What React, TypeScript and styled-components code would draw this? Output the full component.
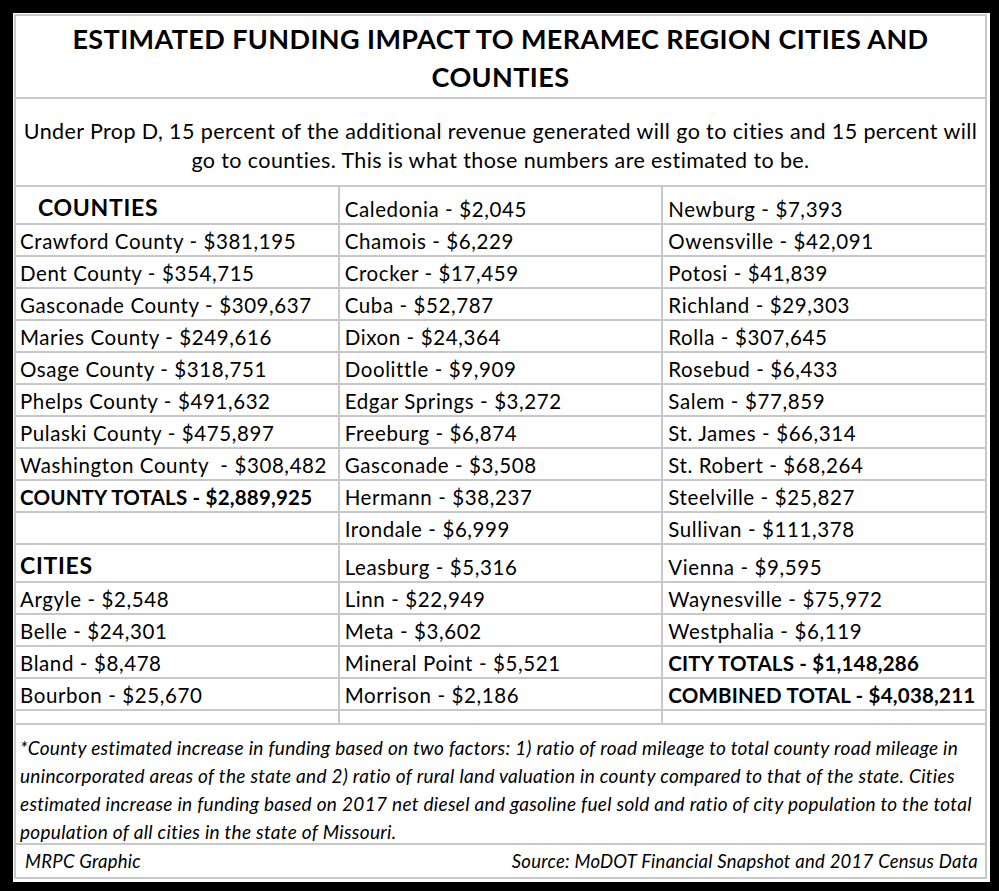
import React from "react";
import styled, { createGlobalStyle } from "styled-components";

const Global = createGlobalStyle`
  html, body { margin: 0; padding: 0; background: #000; }
  body { font-family: Lato, "Liberation Sans", sans-serif; color: #000; }
`;

const Frame = styled.div`
  width: 999px;
  height: 891px;
  box-sizing: border-box;
  background: #000;
  padding: 13px 9px 9px 13px;
`;

const Paper = styled.div`
  width: 100%;
  height: 100%;
  box-sizing: border-box;
  background: #fff;
  padding: 1px 3px 3px 1px;
`;

const Table = styled.div`
  box-sizing: border-box;
  height: 100%;
  border: 2px solid #c8c8c8;
  background: #c8c8c8;
  display: grid;
  grid-template-columns: repeat(3, 1fr);
  grid-template-rows: 81px 86px 36px repeat(10, 30px) 36px repeat(4, 30px) 12px 118px 32px;
  gap: 2px;
`;

const Title = styled.div`
  grid-column: 1 / -1;
  background: #fff;
  display: flex;
  align-items: center;
  justify-content: center;
  text-align: center;
  padding: 3px 40px 0;
  font-weight: 700;
  font-size: 27px;
  letter-spacing: 0.4px;
  line-height: 38px;
`;

const Subtitle = styled.div`
  grid-column: 1 / -1;
  background: #fff;
  display: flex;
  align-items: center;
  justify-content: center;
  text-align: center;
  padding: 7px 0 0;
  font-size: 21.5px;
  letter-spacing: 0.4px;
  line-height: 29px;
  white-space: nowrap;
`;

type Kind = "normal" | "bold" | "header" | "blank";

const Cell = styled.div<{ $kind: Kind; $indent?: number }>`
  background: #fff;
  display: flex;
  align-items: flex-end;
  padding: 0 0 2px ${(p) => p.$indent ?? 4}px;
  white-space: pre;
  overflow: hidden;
  font-size: ${(p) => (p.$kind === "header" ? "23px" : "20.5px")};
  letter-spacing: ${(p) => (p.$kind === "header" ? "0.7px" : p.$kind === "bold" ? "0.2px" : "0.6px")};
  font-weight: ${(p) => (p.$kind === "bold" || p.$kind === "header" ? 700 : 400)};
  line-height: ${(p) => (p.$kind === "header" ? "28px" : "24px")};
`;

const Footnote = styled.div`
  grid-column: 1 / -1;
  background: #fff;
  padding: 9px 0 0 4px;
  font-style: italic;
  font-size: 19px;
  letter-spacing: 0.3px;
  line-height: 28px;
  white-space: nowrap;
  overflow: hidden;
`;

const SourceRow = styled.div`
  grid-column: 1 / -1;
  background: #fff;
  display: flex;
  align-items: center;
  justify-content: space-between;
  padding: 0 7px 0 9px;
  font-style: italic;
  font-size: 18.5px;
  letter-spacing: 0.25px;
`;

type Entry = { text: string; kind?: Kind; indent?: number };

const col1: Entry[] = [
  { text: "COUNTIES", kind: "header", indent: 22 },
  { text: "Crawford County - $381,195" },
  { text: "Dent County - $354,715" },
  { text: "Gasconade County - $309,637" },
  { text: "Maries County - $249,616" },
  { text: "Osage County - $318,751" },
  { text: "Phelps County - $491,632" },
  { text: "Pulaski County - $475,897" },
  { text: "Washington County  - $308,482" },
  { text: "COUNTY TOTALS - $2,889,925", kind: "bold" },
  { text: "", kind: "blank" },
  { text: "CITIES", kind: "header" },
  { text: "Argyle - $2,548" },
  { text: "Belle - $24,301" },
  { text: "Bland - $8,478" },
  { text: "Bourbon - $25,670" },
  { text: "", kind: "blank" },
];

const col2: Entry[] = [
  { text: "Caledonia - $2,045" },
  { text: "Chamois - $6,229" },
  { text: "Crocker - $17,459" },
  { text: "Cuba - $52,787" },
  { text: "Dixon - $24,364" },
  { text: "Doolittle - $9,909" },
  { text: "Edgar Springs - $3,272" },
  { text: "Freeburg - $6,874" },
  { text: "Gasconade - $3,508" },
  { text: "Hermann - $38,237" },
  { text: "Irondale - $6,999" },
  { text: "Leasburg - $5,316" },
  { text: "Linn - $22,949" },
  { text: "Meta - $3,602" },
  { text: "Mineral Point - $5,521" },
  { text: "Morrison - $2,186" },
  { text: "", kind: "blank" },
];

const col3: Entry[] = [
  { text: "Newburg - $7,393" },
  { text: "Owensville - $42,091" },
  { text: "Potosi - $41,839" },
  { text: "Richland - $29,303" },
  { text: "Rolla - $307,645" },
  { text: "Rosebud - $6,433" },
  { text: "Salem - $77,859" },
  { text: "St. James - $66,314" },
  { text: "St. Robert - $68,264" },
  { text: "Steelville - $25,827" },
  { text: "Sullivan - $111,378" },
  { text: "Vienna - $9,595" },
  { text: "Waynesville - $75,972" },
  { text: "Westphalia - $6,119" },
  { text: "CITY TOTALS - $1,148,286", kind: "bold" },
  { text: "COMBINED TOTAL - $4,038,211", kind: "bold" },
  { text: "", kind: "blank" },
];

export default function App() {
  const rows = col1.map((_, i) => [col1[i], col2[i], col3[i]]);
  return (
    <Frame>
      <Global />
      <Paper>
        <Table>
          <Title>
            ESTIMATED FUNDING IMPACT TO MERAMEC REGION CITIES AND
            <br />
            COUNTIES
          </Title>
          <Subtitle>
            Under Prop D, 15 percent of the additional revenue generated will go to cities and 15 percent will
            <br />
            go to counties. This is what those numbers are estimated to be.
          </Subtitle>
          {rows.flatMap((row, r) =>
            row.map((e, c) => (
              <Cell key={`${r}-${c}`} $kind={e.kind ?? "normal"} $indent={c === 0 ? e.indent : 5}>
                {e.text}
              </Cell>
            ))
          )}
          <Footnote>
            *County estimated increase in funding based on two factors: 1) ratio of road mileage to total county road
            mileage in
            <br />
            unincorporated areas of the state and 2) ratio of rural land valuation in county compared to that of the
            state. Cities
            <br />
            estimated increase in funding based on 2017 net diesel and gasoline fuel sold and ratio of city population to
            the total
            <br />
            population of all cities in the state of Missouri.
          </Footnote>
          <SourceRow>
            <span>MRPC Graphic</span>
            <span>Source: MoDOT Financial Snapshot and 2017 Census Data</span>
          </SourceRow>
        </Table>
      </Paper>
    </Frame>
  );
}
